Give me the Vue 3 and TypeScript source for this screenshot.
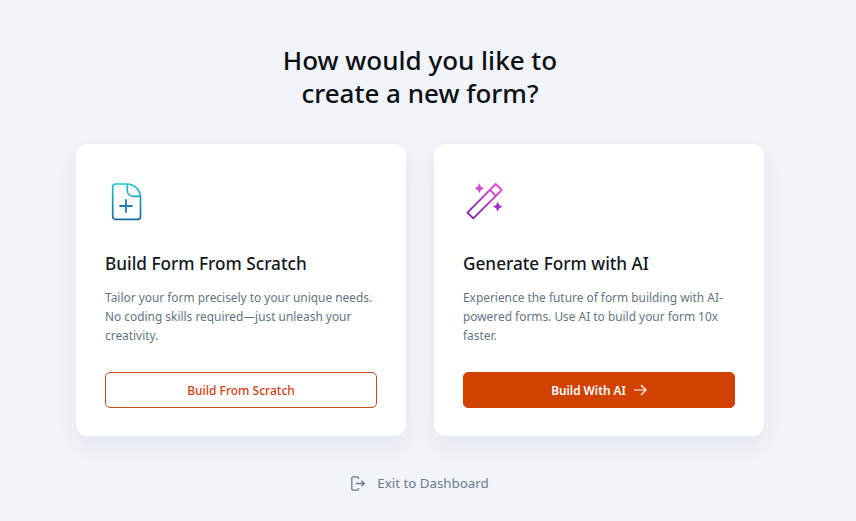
<script setup lang="ts">
interface Choice {
  title: string;
  text: string;
  action: string;
  primary: boolean;
}
const choices: Choice[] = [
  {
    title: "Build Form From Scratch",
    text: "Tailor your form precisely to your unique needs. No coding skills required—just unleash your creativity.",
    action: "Build From Scratch",
    primary: false,
  },
  {
    title: "Generate Form with AI",
    text: "Experience the future of form building with AI-powered forms. Use AI to build your form 10x faster.",
    action: "Build With AI",
    primary: true,
  },
];
</script>

<template>
  <main class="page">
    <h1 class="heading">How would you like to<br />create a new form?</h1>
    <section class="cards">
      <article v-for="c in choices" :key="c.title" class="card">
        <svg v-if="!c.primary" class="icon" width="40" height="41" viewBox="0 0 40 41" fill="none">
          <defs>
            <linearGradient id="fileGrad" gradientUnits="userSpaceOnUse" x1="20" y1="3" x2="20" y2="40">
              <stop offset="0" stop-color="#1cc8d0" />
              <stop offset="1" stop-color="#136aa6" />
            </linearGradient>
          </defs>
          <path d="M10.500 4H22C29 4 35.500 10 35.500 17.500V36.500A2.800 2.800 0 0 1 32.700 39.300H10.500A2.800 2.800 0 0 1 7.700 36.500V6.800A2.800 2.800 0 0 1 10.500 4Z" stroke="url(#fileGrad)" stroke-width="1.700" stroke-linejoin="round" />
          <path d="M22.300 4.500V10.500C22.300 14 25 16.300 28.500 16.300H35.200" stroke="url(#fileGrad)" stroke-width="1.700" />
          <path d="M21 20v12M15 26h12" stroke="#1a7fae" stroke-width="1.800" stroke-linecap="round" />
        </svg>
        <svg v-else class="icon" width="40" height="41" viewBox="0 0 40 41" fill="none">
          <defs>
            <linearGradient id="wandGrad" gradientUnits="userSpaceOnUse" x1="38" y1="4" x2="5" y2="38">
              <stop offset="0" stop-color="#e94fd2" />
              <stop offset="1" stop-color="#7a1fb0" />
            </linearGradient>
          </defs>
          <path d="M32.700 4 38.700 10 10.300 38.300 4.500 32.600Z" stroke="url(#wandGrad)" stroke-width="1.800" stroke-linejoin="round" />
          <path d="M27 9.800 32.800 15.800" stroke="url(#wandGrad)" stroke-width="1.800" />
          <path d="M16.300 3.300 17.900 6.700 21 8.300 17.900 9.900 16.300 13.300 14.700 9.900 11.600 8.300 14.700 6.700Z" fill="#d946d6" />
          <path d="M34.700 21.700 36.300 25.100 39.400 26.700 36.300 28.300 34.700 31.700 33.100 28.300 30 26.700 33.100 25.100Z" fill="#a12fc4" />
        </svg>
        <h2 class="title">{{ c.title }}</h2>
        <p class="text">{{ c.text }}</p>
        <button class="btn" :class="{ primary: c.primary }" type="button">
          {{ c.action }}
          <svg width="14" height="12" viewBox="0 0 14 12" fill="none" v-if="c.primary">
            <path d="M1 6h12M8 1l5 5-5 5" stroke="#fff" stroke-width="1.200" />
          </svg>
        </button>
      </article>
    </section>
    <a class="exit">
      <svg width="14" height="15" viewBox="0 0 14 15" fill="none">
        <path d="M7.500 3V2.300A1.500 1.500 0 0 0 6 .800H2.300A1.500 1.500 0 0 0 .800 2.300v10.400a1.500 1.500 0 0 0 1.500 1.500H6a1.500 1.500 0 0 0 1.500-1.500V12" stroke="#6b7a8c" stroke-width="1.300" />
        <path d="M5 7.500h8.300M10.500 4.800l2.800 2.700-2.800 2.700" stroke="#6b7a8c" stroke-width="1.300" />
      </svg>
      <span>Exit to Dashboard</span>
    </a>
  </main>
</template>

<style>
html, body { margin: 0; background: #f1f4f9; overflow: hidden; }
</style>

<style scoped>
.page {
  box-sizing: border-box;
  width: 840px;
  height: 521px;
  padding-top: 44px;
  display: flex;
  flex-direction: column;
  align-items: center;
  font-family: "Noto Sans", "Open Sans", sans-serif;
}
.heading {
  margin: 0;
  font-size: 26px;
  line-height: 33px;
  font-weight: 500;
  color: #0c0f14;
  text-align: center;
}
.cards {
  margin-top: 34px;
  display: flex;
  gap: 28px;
}
.card {
  box-sizing: border-box;
  width: 330px;
  height: 292px;
  padding: 36px 29px 28px;
  background: #fff;
  border-radius: 12px;
  box-shadow: 0 10px 24px rgba(60, 80, 120, 0.07);
  display: flex;
  flex-direction: column;
}
.icon { display: block; flex: none; }
.title {
  margin: 31px 0 0;
  font-size: 17.200px;
  line-height: 24px;
  font-weight: 500;
  color: #14181f;
}
.text {
  margin: 12px 0 0;
  font-size: 11.900px;
  line-height: 19px;
  color: #64757f;
}
.btn {
  margin-top: auto;
  box-sizing: border-box;
  height: 36px;
  width: 100%;
  flex: none;
  border: 1px solid #cf4a1a;
  border-radius: 5px;
  background: #fff;
  color: #cf4314;
  font: 500 12px "Noto Sans", sans-serif;
  display: flex;
  align-items: center;
  justify-content: center;
  gap: 7px;
}
.btn.primary { background: #d14200; border-color: #d14200; color: #fff; font-weight: 600; font-size: 11.800px; }
.exit {
  margin-top: 37px;
  display: flex;
  align-items: center;
  gap: 12px;
  font-size: 13.300px;
  line-height: 20px;
  color: #6b7a8c;
}
.exit svg { display: block; }
</style>
